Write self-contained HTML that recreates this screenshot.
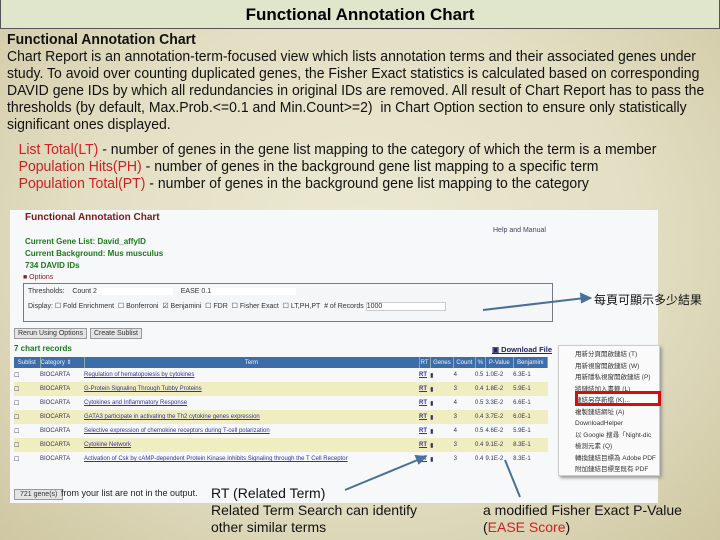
<!DOCTYPE html>
<html><head><meta charset="utf-8"><style>
*{margin:0;padding:0;box-sizing:border-box}
body{width:720px;height:540px;overflow:hidden;position:relative;font-family:"Liberation Sans",sans-serif;
background:radial-gradient(ellipse at 50% 45%,#ece9d4 0%,#e3dfc4 55%,#cfc7a2 100%);}
.title{position:absolute;left:0;top:0;width:720px;height:29px;background:#dfe6cc;border:1px solid #555;border-top:none;text-align:center;font:bold 17px "Liberation Sans",sans-serif;line-height:29px;color:#000}
.txt{position:absolute;left:7px;top:32px;width:800px;font-size:14.5px;line-height:17px;color:#111;transform:scaleX(0.967);transform-origin:0 0}
.red{color:#d02020}
.shot{position:absolute;left:10px;top:210px;width:648px;height:293px;background:#f7f8fa;font-family:"Liberation Sans",sans-serif;font-size:7px;color:#333}
.a{position:absolute;white-space:nowrap}
.g{color:#1a7a1a;font-weight:bold;font-size:8px}
table{position:absolute;left:4px;top:147px;width:534px;border-collapse:collapse;font-size:6px}
th{background:#3b6ea8;color:#eef;height:11px;font-weight:normal;border-right:1px solid #8aa}
td{height:14px;color:#335}
tr.y td{background:#f0edc0}
.u{text-decoration:underline;color:#339}
.menu{position:absolute;left:558px;top:345px;width:102px;height:131px;background:#fafafa;border:1px solid #ccc;box-shadow:2px 2px 3px #999;font-size:6.5px;color:#333}
.menu div{height:11.5px;padding-left:16px;line-height:11.5px;white-space:nowrap;overflow:hidden}
.ann{position:absolute;font-size:14px;line-height:17px;color:#111;font-family:"Liberation Sans",sans-serif}
</style></head><body>
<div class="title">Functional Annotation Chart</div>
<div class="txt"><b>Functional Annotation Chart</b><br>Chart Report is an annotation-term-focused view which lists annotation terms and their associated genes under<br>study. To avoid over counting duplicated genes, the Fisher Exact statistics is calculated based on corresponding<br>DAVID gene IDs by which all redundancies in original IDs are removed. All result of Chart Report has to pass the<br>thresholds (by default, Max.Prob.&lt;=0.1 and Min.Count&gt;=2)&nbsp; in Chart Option section to ensure only statistically<br>significant ones displayed.
<div style="margin:8px 0 0 12px"><span class="red">List Total(LT)</span> - number of genes in the gene list mapping to the category of which the term is a member<br><span class="red">Population Hits(PH)</span> - number of genes in the background gene list mapping to a specific term<br><span class="red">Population Total(PT)</span> - number of genes in the background gene list mapping to the category</div></div>
<div class="shot">
<div class="a" style="left:15px;top:2px;font-size:10px;font-weight:bold;color:#7a1a1a">Functional Annotation Chart</div>
<div class="a" style="left:483px;top:17px;color:#446">Help and Manual</div>
<div class="a g" style="left:15px;top:27px">Current Gene List: David_affyID</div>
<div class="a g" style="left:15px;top:39px">Current Background: Mus musculus</div>
<div class="a g" style="left:15px;top:51px">734 DAVID IDs</div>
<div class="a" style="left:13px;top:64px;color:#822;font-size:7px">■ Options</div>
<div class="a" style="left:13px;top:73px;width:530px;height:39px;border:1px solid #778;background:#f5f6f8"></div>
<div class="a" style="left:18px;top:78px">Thresholds: &nbsp;&nbsp; Count <span style="background:#fff;display:inline-block;width:80px">2</span> &nbsp;&nbsp; EASE <span style="background:#fff;display:inline-block;width:95px">0.1</span></div>
<div class="a" style="left:18px;top:92px">Display: ☐ Fold Enrichment &nbsp;☐ Bonferroni &nbsp;☑ Benjamini &nbsp;☐ FDR &nbsp;☐ Fisher Exact &nbsp;☐ LT,PH,PT &nbsp;# of Records <span style="background:#fff;display:inline-block;width:80px;border:1px solid #ccc">1000</span></div>
<div class="a" style="left:4px;top:118px;border:1px solid #999;background:#e4e4e4;padding:1px 3px">Rerun Using Options</div>
<div class="a" style="left:80px;top:118px;border:1px solid #999;background:#e4e4e4;padding:1px 3px">Create Sublist</div>
<div class="a g" style="left:4px;top:134px">7 chart records</div>
<div class="a" style="left:482px;top:135px;color:#226;font-weight:bold;font-size:7.5px;text-decoration:underline">▣ Download File</div>
<table>
<tr><th style="width:26px">Sublist</th><th style="width:44px;text-align:left">Category ⇕</th><th style="width:335px">Term</th><th>RT</th><th>Genes</th><th>Count</th><th>%</th><th>P-Value</th><th>Benjamini</th></tr>
<tr><td>☐</td><td>BIOCARTA</td><td class="u">Regulation of hematopoiesis by cytokines</td><td class="u"><b>RT</b></td><td>▮</td><td>4</td><td>0.5</td><td>1.0E-2</td><td>6.3E-1</td></tr>
<tr class="y"><td>☐</td><td>BIOCARTA</td><td class="u">G-Protein Signaling Through Tubby Proteins</td><td class="u"><b>RT</b></td><td>▮</td><td>3</td><td>0.4</td><td>1.8E-2</td><td>5.9E-1</td></tr>
<tr><td>☐</td><td>BIOCARTA</td><td class="u">Cytokines and Inflammatory Response</td><td class="u"><b>RT</b></td><td>▮</td><td>4</td><td>0.5</td><td>3.3E-2</td><td>6.6E-1</td></tr>
<tr class="y"><td>☐</td><td>BIOCARTA</td><td class="u">GATA3 participate in activating the Th2 cytokine genes expression</td><td class="u"><b>RT</b></td><td>▮</td><td>3</td><td>0.4</td><td>3.7E-2</td><td>6.0E-1</td></tr>
<tr><td>☐</td><td>BIOCARTA</td><td class="u">Selective expression of chemokine receptors during T-cell polarization</td><td class="u"><b>RT</b></td><td>▮</td><td>4</td><td>0.5</td><td>4.6E-2</td><td>5.9E-1</td></tr>
<tr class="y"><td>☐</td><td>BIOCARTA</td><td class="u">Cytokine Network</td><td class="u"><b>RT</b></td><td>▮</td><td>3</td><td>0.4</td><td>9.1E-2</td><td>8.3E-1</td></tr>
<tr><td>☐</td><td>BIOCARTA</td><td class="u">Activation of Csk by cAMP-dependent Protein Kinase Inhibits Signaling through the T Cell Receptor</td><td class="u"><b>RT</b></td><td>▮</td><td>3</td><td>0.4</td><td>9.1E-2</td><td>8.3E-1</td></tr>
</table>
<div class="a" style="left:4px;top:279px;border:1px solid #999;background:#e4e4e4;padding:1px 5px">721 gene(s)</div>
<div class="a" style="left:51px;top:278px;font-size:9px;color:#222">from your list are not in the output.</div>
</div>
<div class="menu" style="padding-top:3px">
<div>用新分頁開啟鏈結 (T)</div><div>用新視窗開啟鏈結 (W)</div><div>用新隱私視窗開啟鏈結 (P)</div><div>將鏈結加入書籤 (L)</div><div>鏈結另存新檔 (K)...</div><div>複製鏈結網址 (A)</div><div>DownloadHelper</div><div>以 Google 搜尋「Night-dic</div><div>檢測元素 (Q)</div><div>轉換鏈結目標為 Adobe PDF</div><div>附加鏈結目標至既有 PDF</div>
</div>
<div style="position:absolute;left:575px;top:391px;width:86px;height:15px;border:3px solid #d01010"></div>
<svg style="position:absolute;left:0;top:0" width="720" height="540">
<g stroke="#4a6f99" stroke-width="2" fill="#4a6f99">
<line x1="483" y1="310" x2="585" y2="298"/><polygon points="590,298 581,294 582,302"/>
<line x1="345" y1="490" x2="420" y2="459"/><polygon points="425,457 416,456 419,463"/>
<line x1="520" y1="497" x2="505" y2="460"/>
</g></svg>
<div class="ann" style="left:594px;top:291px;font-family:'Noto Sans CJK TC',sans-serif;font-size:12px">每頁可顯示多少結果</div>
<div class="ann" style="left:211px;top:485px">RT (Related Term)<br>Related Term Search can identify<br>other similar terms</div>
<div class="ann" style="left:483px;top:502px">a modified Fisher Exact P-Value<br>(<span class="red">EASE Score</span>)</div>
</body></html>
